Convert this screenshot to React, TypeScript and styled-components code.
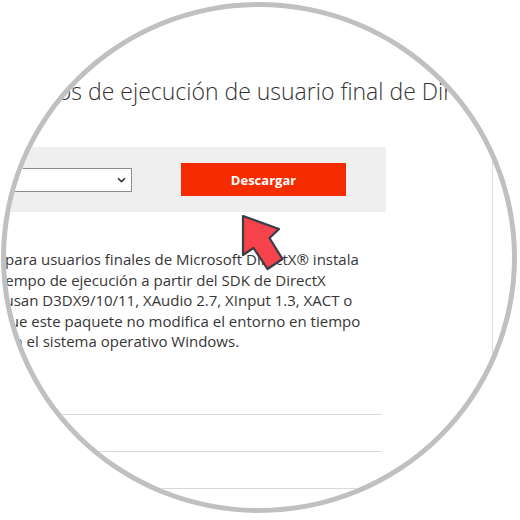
import styled, { createGlobalStyle } from "styled-components";

const GlobalStyle = createGlobalStyle`
  html, body {
    margin: 0;
    padding: 0;
    background: #fff;
  }
  body {
    font-family: "Open Sans", "Noto Sans", Arial, sans-serif;
    color: #333;
  }
`;

// lines of the description, each starting with the tail of the word that the lens cuts off
const lines = [
  "ón para usuarios finales de Microsoft DirectX® instala",
  "n tiempo de ejecución a partir del SDK de DirectX",
  "ue usan D3DX9/10/11, XAudio 2.7, XInput 1.3, XACT o",
  "ta que este paquete no modifica el entorno en tiempo",
  "do en el sistema operativo Windows.",
];

function App() {
  return (
    <Page>
      <GlobalStyle />
      <Lens>
        <Canvas>
          <Main>
            <Title>de tiempos de ejecución de usuario final de DirectX</Title>
            <Band>
              <Select>
                <svg width="9" height="6" viewBox="0 0 9 6">
                  <path d="M1 1.2 L4.5 4.6 L8 1.2" fill="none" stroke="#333" strokeWidth="1.6" />
                </svg>
              </Select>
              <Button>Descargar</Button>
            </Band>
            <Description>
              {lines.map((l) => (
                <Line key={l}>{l}</Line>
              ))}
            </Description>
            <Rows>
              <Row />
              <Row />
              <Row />
            </Rows>
          </Main>
          <Sidebar />
        </Canvas>
      </Lens>
      <Pointer width="70" height="70" viewBox="0 0 70 70">
        <path
          d="M13 11 L49 24 L39.5 33 L52.5 54 L37.5 64 L23.5 43 L13 50 Z"
          fill="#f6424b"
          stroke="#3b3b48"
          strokeWidth="2.2"
          strokeLinejoin="round"
        />
      </Pointer>
    </Page>
  );
}
export default App;

const Page = styled.div`
  position: relative;
  width: 520px;
  height: 520px;
  padding: 2px 0 0 1px;
  box-sizing: border-box;
  overflow: hidden;
  background: #fff;
`;

const Lens = styled.div`
  width: 516px;
  height: 511px;
  box-sizing: border-box;
  border: 5px solid #c0c0c0;
  border-radius: 50%;
  overflow: hidden;
  background: #fff;
`;

const Canvas = styled.div`
  display: flex;
  align-items: stretch;
  margin-left: -26px;
  height: 100%;
`;

const Main = styled.div`
  width: 406px;
  flex-shrink: 0;
`;

const Title = styled.h1`
  margin: 69px 0 0 -14px;
  font-size: 23px;
  line-height: 30px;
  font-weight: 300;
  color: #333;
  white-space: nowrap;
`;

const Band = styled.div`
  margin-top: 41px;
  height: 65px;
  background: #efefef;
  display: flex;
  align-items: center;
  justify-content: flex-end;
  gap: 49px;
  padding-right: 40px;
`;

const Select = styled.div`
  flex-shrink: 0;
  width: 140px;
  height: 24px;
  box-sizing: border-box;
  background: #fff;
  border: 1px solid #8c8c8c;
  display: flex;
  align-items: center;
  justify-content: flex-end;
  padding-right: 5px;
`;

const Button = styled.div`
  flex-shrink: 0;
  width: 165px;
  height: 33px;
  background: #f52c00;
  color: #fff;
  font-family: "Open Sans", Arial, sans-serif;
  font-weight: 700;
  font-size: 13px;
  display: flex;
  align-items: center;
  justify-content: center;
`;

const Description = styled.div`
  margin: 37px 0 0 3px;
  font-size: 15px;
  line-height: 20.5px;
  color: #363636;
`;

const Line = styled.div`
  white-space: nowrap;
`;

const Rows = styled.div`
  margin: 62px 4px 0 0;
`;

const Row = styled.div`
  height: 37px;
  box-sizing: border-box;
  border-top: 1px solid #d9d9d9;
`;

const Sidebar = styled.div`
  margin: 153px 0 0 106px;
  width: 60px;
  border-left: 1px solid #dcdcdc;
`;

const Pointer = styled.svg`
  position: absolute;
  left: 230px;
  top: 205px;
`;
